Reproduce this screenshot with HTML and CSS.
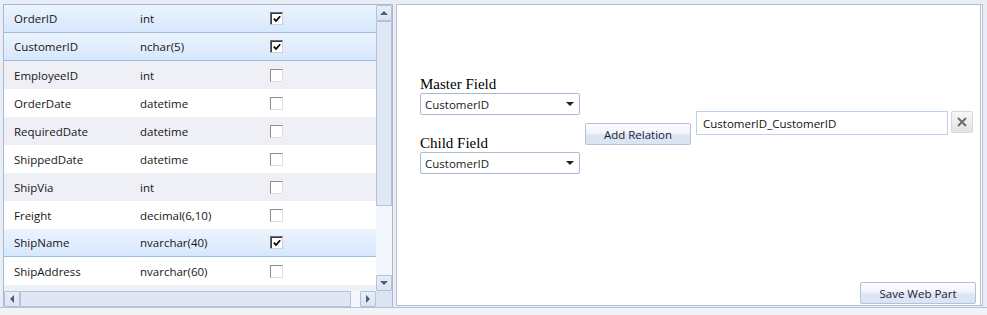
FILE: index.html
```html
<!DOCTYPE html>
<html>
<head>
<meta charset="utf-8">
<link rel="stylesheet" href="styles.css">
</head>
<body>
<div class="page">
  <div class="left">
    <div class="grid-area">
      <div class="viewport">
        <div class="row sel"><span class="c-name">OrderID</span><span class="c-type">int</span><span class="chk on"><svg viewBox="0 0 8 8" width="8" height="8"><path d="M0.8 3.6 L3 6 L7.2 1.2" fill="none" stroke="#000" stroke-width="1.7"/></svg></span></div>
        <div class="row sel"><span class="c-name">CustomerID</span><span class="c-type">nchar(5)</span><span class="chk on"><svg viewBox="0 0 8 8" width="8" height="8"><path d="M0.8 3.6 L3 6 L7.2 1.2" fill="none" stroke="#000" stroke-width="1.7"/></svg></span></div>
        <div class="row alt"><span class="c-name">EmployeeID</span><span class="c-type">int</span><span class="chk"></span></div>
        <div class="row"><span class="c-name">OrderDate</span><span class="c-type">datetime</span><span class="chk"></span></div>
        <div class="row alt"><span class="c-name">RequiredDate</span><span class="c-type">datetime</span><span class="chk"></span></div>
        <div class="row"><span class="c-name">ShippedDate</span><span class="c-type">datetime</span><span class="chk"></span></div>
        <div class="row alt"><span class="c-name">ShipVia</span><span class="c-type">int</span><span class="chk"></span></div>
        <div class="row"><span class="c-name">Freight</span><span class="c-type">decimal(6,10)</span><span class="chk"></span></div>
        <div class="row sel"><span class="c-name">ShipName</span><span class="c-type">nvarchar(40)</span><span class="chk on"><svg viewBox="0 0 8 8" width="8" height="8"><path d="M0.8 3.6 L3 6 L7.2 1.2" fill="none" stroke="#000" stroke-width="1.7"/></svg></span></div>
        <div class="row"><span class="c-name">ShipAddress</span><span class="c-type">nvarchar(60)</span><span class="chk"></span></div>
        <div class="row alt"></div>
      </div>
      <div class="vscroll">
        <div class="sbtn"><span class="arr up"></span></div>
        <div class="vthumb"></div>
        <div class="vtrack"></div>
        <div class="sbtn"><span class="arr down"></span></div>
      </div>
    </div>
    <div class="hscroll-row">
      <div class="hscroll">
        <div class="sbtn"><span class="arr lft"></span></div>
        <div class="hthumb"></div>
        <div class="htrack"></div>
        <div class="sbtn"><span class="arr rgt"></span></div>
      </div>
      <div class="corner"></div>
    </div>
  </div>
  <div class="right">
    <div class="relation">
      <div class="fields">
        <div class="label">Master Field</div>
        <div class="select"><span>CustomerID</span><span class="sel-arr"></span></div>
        <div class="label child">Child Field</div>
        <div class="select"><span>CustomerID</span><span class="sel-arr"></span></div>
      </div>
      <div class="btn add">Add Relation</div>
      <div class="textbox">CustomerID_CustomerID</div>
      <div class="xbtn"><svg viewBox="0 0 10 10" width="10" height="10"><path d="M1 1 L9 9 M9 1 L1 9" stroke="#6f6f6f" stroke-width="2"/></svg></div>
    </div>
    <div class="footer">
      <div class="btn save">Save Web Part</div>
    </div>
  </div>
</div>
</body>
</html>
```
FILE: styles.css
```css
* { box-sizing: border-box; }
html, body { margin: 0; padding: 0; }
body {
  width: 987px;
  height: 315px;
  overflow: hidden;
  background: #f1f3f9;
  font-family: "Open Sans", "Noto Sans", sans-serif;
  font-size: 11.5px;
  color: #161616;
}
.page {
  display: flex;
  align-items: flex-start;
  height: 308px;
  padding: 4px 0 0 3px;
  background: #e9edf5;
  border-bottom: 1px solid #b6c1d3;
}
.left {
  width: 390px;
  height: 303px;
  border: 1px solid #a9b7cc;
  border-bottom: none;
  display: flex;
  flex-direction: column;
  background: #fff;
}
.grid-area {
  display: flex;
  height: 286px;
}
.viewport {
  width: 372px;
  height: 286px;
  overflow: hidden;
}
.row {
  display: flex;
  align-items: center;
  height: 28px;
  padding-left: 10px;
  background: #fff;
  white-space: nowrap;
}
.row.alt { background: #efeff6; }
.row.sel {
  background: linear-gradient(#ecf4fe, #d6e7fc);
  border-bottom: 1px solid #9ebbe2;
}
.c-name { width: 126px; }
.c-type { width: 130px; }
.chk {
  width: 13px;
  height: 13px;
  background: #fff;
  border: 1px solid;
  border-color: #8d8e8f #dedede #dedede #8d8e8f;
  display: flex;
  align-items: center;
  justify-content: center;
}
.chk.on {
  border-color: #6a6a6a #d0d0d0 #d0d0d0 #6a6a6a;
  box-shadow: inset 1px 1px 0 #3c3c3c;
}
.chk svg { display: block; margin: 1px 0 0 1px; }

.vscroll {
  width: 16px;
  display: flex;
  flex-direction: column;
  background: #f3f7fd;
}
.sbtn {
  width: 16px;
  height: 16px;
  border: 1px solid #b3c1d9;
  border-radius: 1px;
  background: linear-gradient(#e8eef8, #dbe4f3);
  display: flex;
  align-items: center;
  justify-content: center;
  flex: none;
}
.vthumb {
  height: 185px;
  border: 1px solid #b6c4db;
  background: #dfe7f4;
  flex: none;
}
.vtrack { flex: 1; }
.arr { width: 0; height: 0; border-style: solid; border-color: transparent; }
.arr.up { border-width: 0 4px 4px 4px; border-bottom-color: #4a5d81; }
.arr.down { border-width: 4px 4px 0 4px; border-top-color: #4a5d81; }
.arr.lft { border-width: 4px 4px 4px 0; border-right-color: #4a5d81; }
.arr.rgt { border-width: 4px 0 4px 4px; border-left-color: #4a5d81; }

.hscroll-row {
  display: flex;
  height: 16px;
}
.hscroll {
  width: 372px;
  display: flex;
  background: #f3f7fd;
}
.hthumb {
  width: 331px;
  border: 1px solid #b6c4db;
  background: #dfe7f4;
  flex: none;
}
.htrack { flex: 1; }
.corner {
  width: 16px;
  background: #dbe4f2;
}

.right {
  margin-left: 3px;
  width: 587px;
  height: 302px;
  border: 1px solid #b3bfd3;
  border-right: 3px double #b3bfd3;
  background: #fff;
  display: flex;
  flex-direction: column;
}
.relation {
  display: flex;
  align-items: flex-start;
  padding: 71px 0 0 23px;
}
.fields {
  width: 160px;
}
.label {
  font-family: "Liberation Serif", "Times New Roman", serif;
  font-size: 15px;
  line-height: 17px;
  height: 17px;
  color: #000;
}
.label.child { margin-top: 20px; }
.select {
  height: 22px;
  border: 1px solid #a9bbd4;
  border-radius: 2px;
  display: flex;
  align-items: center;
  justify-content: space-between;
  padding: 0 5px 0 4px;
  font-size: 11.5px;
  color: #1a1a1a;
}
.sel-arr {
  width: 0; height: 0;
  border-style: solid;
  border-width: 4px 4px 0 4px;
  border-color: #222 transparent transparent transparent;
}
.btn {
  height: 22px;
  border: 1px solid #b3c2d8;
  border-radius: 2px;
  background: linear-gradient(#fdfdfe 0%, #f1f4fa 45%, #dce5f3 55%, #dae4f3 100%);
  display: flex;
  align-items: center;
  justify-content: center;
  font-size: 11.5px;
  color: #1b2338;
  white-space: nowrap;
}
.btn.add {
  width: 106px;
  margin: 47px 0 0 5px;
}
.textbox {
  width: 252px;
  height: 24px;
  margin: 35px 0 0 5px;
  border: 1px solid #bcd1ef;
  padding-left: 6px;
  display: flex;
  align-items: center;
  color: #111;
}
.xbtn {
  width: 22px;
  height: 22px;
  margin: 35px 0 0 3px;
  border: 1px solid #d6d6d6;
  border-radius: 2px;
  background: linear-gradient(#f6f6f6, #e4e4e4);
  display: flex;
  align-items: center;
  justify-content: center;
}
.footer {
  margin-top: auto;
  display: flex;
  justify-content: flex-end;
  padding: 0 4px 1px 0;
}
.btn.save { width: 116px; }
```
